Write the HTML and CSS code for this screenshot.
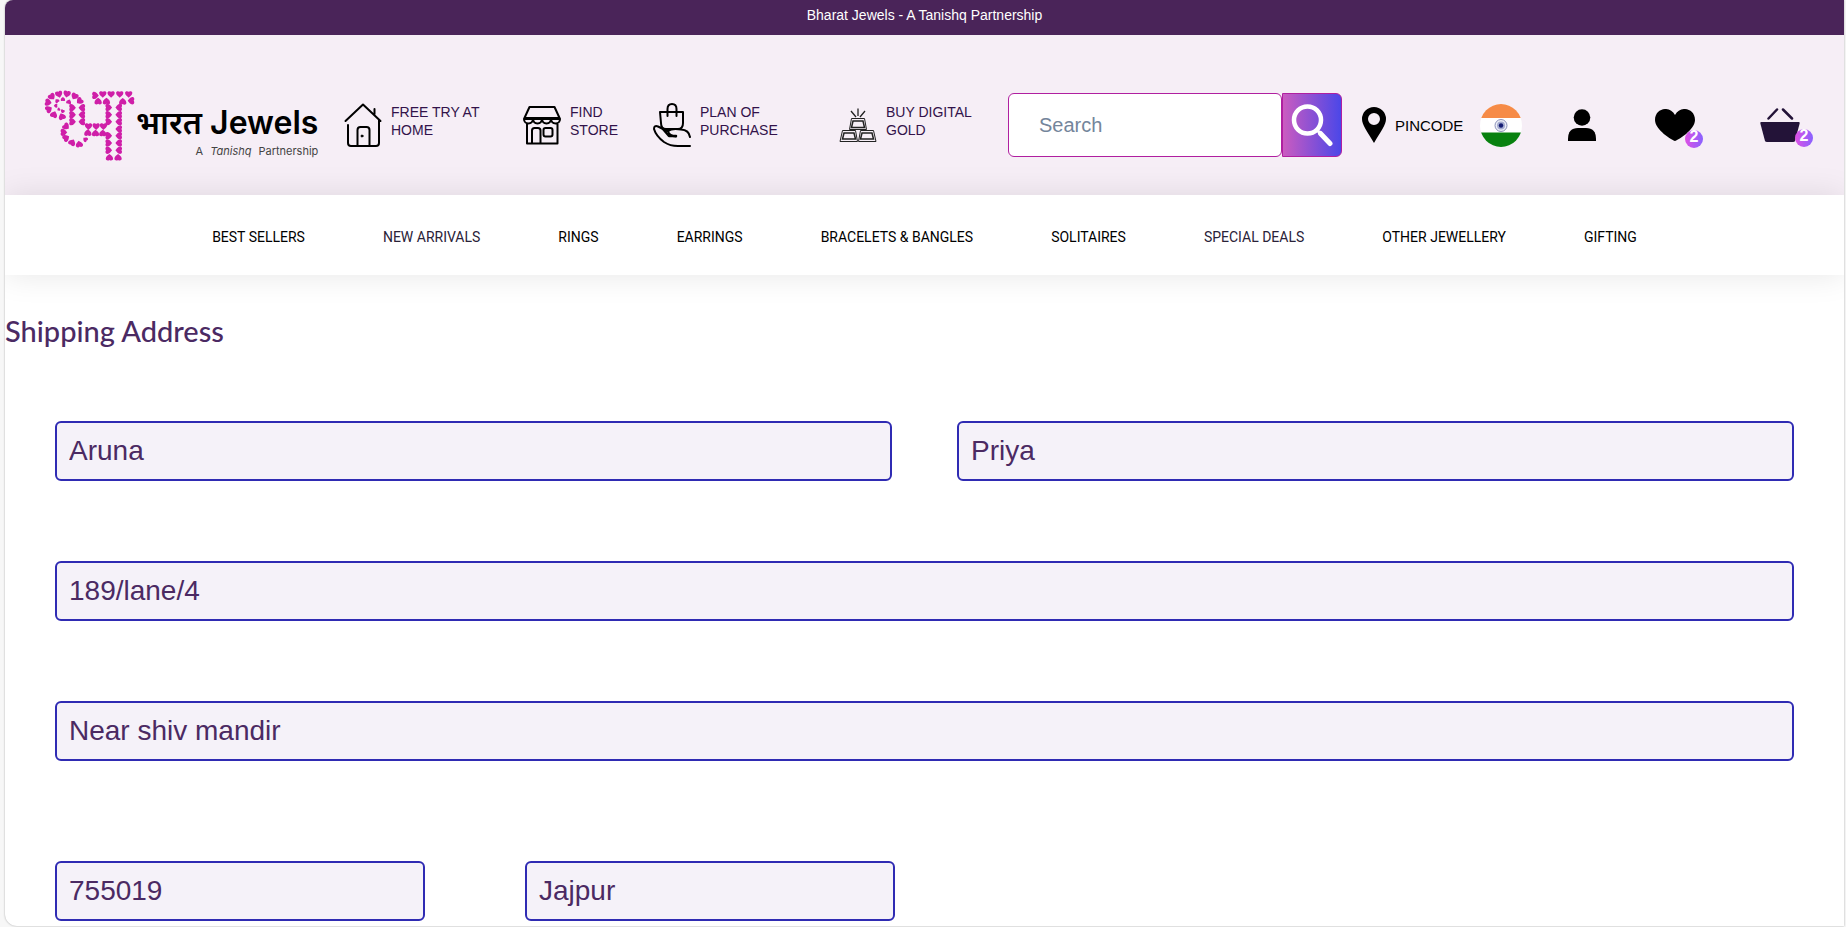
FILE: index.html
```html
<!DOCTYPE html>
<html lang="en">
<head>
<meta charset="utf-8">
<title>Bharat Jewels</title>
<link rel="stylesheet" href="styles.css">
</head>
<body>
<div class="frame">
  <div class="topbar">Bharat Jewels - A Tanishq Partnership</div>
  <header class="header">
    <a class="logo" href="#">
      <svg class="logo-mark" viewBox="130 260 280 216" aria-hidden="true">
        <defs><path id="h" d="M0 10C-3 7-11 3-11-4C-11-11-3-11 0-8C3-11 11-11 11-4C11 3 3 7 0 10Z"/></defs>
        <g fill="#cf1fa8">
          <use href="#h" transform="translate(146 300) rotate(-80)"/>
          <use href="#h" transform="translate(148 320) rotate(-120)"/>
          <use href="#h" transform="translate(163 336) rotate(-160)"/>
          <use href="#h" transform="translate(187 342) rotate(-200)"/>
          <use href="#h" transform="translate(157 283) rotate(-40)"/>
          <use href="#h" transform="translate(178 276) rotate(-15)"/>
          <use href="#h" transform="translate(202 275) rotate(10)"/>
          <use href="#h" transform="translate(225 282) rotate(30)"/>
          <use href="#h" transform="translate(240 296) rotate(50)"/>
          <use href="#h" transform="translate(247 316) rotate(90)"/>
          <use href="#h" transform="translate(247 337) rotate(90)"/>
          <use href="#h" transform="translate(247 358) rotate(90)"/>
          <use href="#h" transform="translate(208 298) rotate(200) scale(.7)"/>
          <use href="#h" transform="translate(190 290) rotate(180) scale(.6)"/>
          <use href="#h" transform="translate(172 295) rotate(140) scale(.6)"/>
          <use href="#h" transform="translate(168 310) rotate(90) scale(.55)"/>
          <use href="#h" transform="translate(177 321) rotate(60) scale(.45)"/>
          <use href="#h" transform="translate(189 327) rotate(20) scale(.55)"/>
          <use href="#h" transform="translate(219 316) rotate(-90)"/>
          <use href="#h" transform="translate(219 337) rotate(-90)"/>
          <use href="#h" transform="translate(219 358) rotate(-90)"/>
          <use href="#h" transform="translate(200 373) rotate(-50)"/>
          <use href="#h" transform="translate(193 390) rotate(-90)"/>
          <use href="#h" transform="translate(200 407) rotate(-120)"/>
          <use href="#h" transform="translate(218 420) rotate(-150)"/>
          <use href="#h" transform="translate(239 425) rotate(170)"/>
          <use href="#h" transform="translate(257 411) rotate(130) scale(.7)"/>
          <use href="#h" transform="translate(267 373)"/>
          <use href="#h" transform="translate(290 373)"/>
          <use href="#h" transform="translate(312 373)"/>
          <use href="#h" transform="translate(265 391) rotate(180)"/>
          <use href="#h" transform="translate(288 392) rotate(180)"/>
          <use href="#h" transform="translate(310 392) rotate(180)"/>
          <use href="#h" transform="translate(288 279) rotate(-90)"/>
          <use href="#h" transform="translate(310 276)"/>
          <use href="#h" transform="translate(335 276)"/>
          <use href="#h" transform="translate(361 276)"/>
          <use href="#h" transform="translate(388 276)"/>
          <use href="#h" transform="translate(296 296) rotate(180)"/>
          <use href="#h" transform="translate(321 296) rotate(180)"/>
          <use href="#h" transform="translate(370 297) rotate(180)"/>
          <use href="#h" transform="translate(395 295) rotate(90)"/>
          <use href="#h" transform="translate(328 315) rotate(-90)"/>
          <use href="#h" transform="translate(328 337) rotate(-90)"/>
          <use href="#h" transform="translate(328 358) rotate(-90)"/>
          <use href="#h" transform="translate(328 400) rotate(-90)"/>
          <use href="#h" transform="translate(328 422) rotate(-90)"/>
          <use href="#h" transform="translate(328 444) rotate(-90)"/>
          <use href="#h" transform="translate(330 465) rotate(180)"/>
          <use href="#h" transform="translate(358 315) rotate(90)"/>
          <use href="#h" transform="translate(358 337) rotate(90)"/>
          <use href="#h" transform="translate(358 358) rotate(90)"/>
          <use href="#h" transform="translate(358 380) rotate(90)"/>
          <use href="#h" transform="translate(358 400) rotate(90)"/>
          <use href="#h" transform="translate(358 422) rotate(90)"/>
          <use href="#h" transform="translate(358 444) rotate(90)"/>
          <use href="#h" transform="translate(356 465) rotate(180)"/>
        </g>
      </svg>
      <span class="logo-words">
        <span class="logo-name"><span lang="hi">भारत</span> Jewels</span>
        <span class="logo-sub"><span>A</span> <span class="logo-brand">Tanishq</span> <span>Partnership</span></span>
      </span>
    </a>
    <nav class="features" aria-label="Services">
      <a class="feature" href="#">
        <svg class="feature-icon" viewBox="0 0 38 44" aria-hidden="true" fill="none" stroke="#000" stroke-width="2" stroke-linecap="round" stroke-linejoin="round"><path d="M1.500 18L19 1.500L36.500 18M4 22V40Q4 43 7 43H32Q35 43 35 40V17M30.500 11V6M13.500 42V27Q13.500 24 16.500 24H22.500Q25.500 24 25.500 27V42"/><circle cx="18" cy="33" r="1" fill="#000" stroke-width="1"/></svg>
        <span>FREE TRY AT<br>HOME</span>
      </a>
      <a class="feature" href="#">
        <svg class="feature-icon" viewBox="0 0 38 44" aria-hidden="true" fill="none" stroke="#000" stroke-width="2" stroke-linejoin="round"><path d="M6.500 4H31.500L37 16H1ZM1 16C1 22 9.500 22 10 16C10.500 22 18.500 22 19 16C19.500 22 27.500 22 28 16C28.500 22 37 22 37 16M4 21V40.500H34.500V21M9 40V27.500Q9 25 11.500 25H15Q17.500 25 17.500 27.500V40"/><path d="M1 15.500H37" stroke-width="3"/><rect x="20.500" y="25" width="9" height="8.500" rx="2"/></svg>
        <span>FIND<br>STORE</span>
      </a>
      <a class="feature" href="#">
        <svg class="feature-icon" viewBox="0 0 38 44" aria-hidden="true" fill="none" stroke="#000" stroke-width="2" stroke-linecap="round" stroke-linejoin="round"><path d="M7 9H30V20Q30 26 25 26H13Q8 26 8 20ZM14.500 13V6Q14.500 1 19 1Q23.500 1 23.500 6V13M37 34Q36 27 28 26.500Q19 25 15 28Q16 33 23 33.500M14 28L5 23.500Q1 22 1 26Q3 33 11 39Q17 43 25 43H37"/><path d="M10 26L16 33H23" stroke-width="2.500"/></svg>
        <span>PLAN OF<br>PURCHASE</span>
      </a>
      <a class="feature" href="#">
        <svg class="feature-icon" viewBox="0 0 38 44" aria-hidden="true" fill="none" stroke="#222" stroke-width="1"><path d="M12.500 15.500H25.500L27.500 26.500H10.500ZM3.500 27.500H16.500L18.500 38.500H1ZM21.500 27.500H34.500L37 38.500H19.500Z"/><path d="M14 18H24L25.500 24.500H12.500ZM5 30H15L16.500 36H3.500ZM23 30H33L34.500 36H21.500Z" stroke-width="1.500"/><path d="M19 5.500V13M12 8L17 14M26 8L21 14" stroke-width="1.300"/></svg>
        <span>BUY DIGITAL<br>GOLD</span>
      </a>
    </nav>
    <form class="search" role="search">
      <input class="search-input" type="search" placeholder="Search" aria-label="Search">
      <button class="search-button" type="button" aria-label="Search">
        <svg class="search-icon" viewBox="0 0 42 44" aria-hidden="true" fill="none" stroke="#fff" stroke-linecap="round"><circle cx="16.500" cy="17" r="13.500" stroke-width="4.500"/><path d="M26.500 27.500L29 30" stroke-width="3"/><path d="M29.500 30.500L39 40.500" stroke-width="5"/></svg>
      </button>
    </form>
    <div class="actions">
      <a class="pincode" href="#">
        <svg class="pin-icon" viewBox="0 0 24 36" aria-hidden="true"><path fill-rule="evenodd" d="M12 0A12 12 0 0 0 0 12C0 18 5 24 12 36C19 24 24 18 24 12A12 12 0 0 0 12 0ZM12 6A6 6 0 1 1 12 18A6 6 0 0 1 12 6Z"/></svg>
        <span>PINCODE</span>
      </a>
      <a href="#" aria-label="Country: India">
        <svg class="flag-icon" viewBox="0 0 42 43" aria-hidden="true"><clipPath id="c"><ellipse cx="21" cy="21.500" rx="21" ry="21.500"/></clipPath><g clip-path="url(#c)"><path fill="#fff" d="M0 0H42V43H0Z"/><path fill="#f68b47" d="M0 0H42V14H0Z"/><path fill="#08810f" d="M0 28.500H42V43H0Z"/></g><circle cx="21" cy="21.500" r="6" fill="#eceef5" stroke="#8d93bb"/><circle cx="21" cy="21.500" r="4" fill="#a4abd0"/><circle cx="21" cy="21.500" r="2.200" fill="#151c73"/></svg>
      </a>
      <a href="#" aria-label="Account">
        <svg class="person-icon" viewBox="0 0 28 32" aria-hidden="true"><circle cx="14" cy="8.500" r="8.300"/><path d="M0 32V30Q0 19 10 19H18Q28 19 28 30V32Z"/></svg>
      </a>
      <a href="#" class="counted" aria-label="Wishlist, 2 items">
        <svg class="heart-icon" viewBox="0 0 40 32" aria-hidden="true"><path d="M20 32C17 31 0 21 0 11C0-1 15-4 20 6C25-4 40-1 40 11C40 21 23 31 20 32Z"/></svg>
        <span class="badge">2</span>
      </a>
      <a href="#" class="counted" aria-label="Basket, 2 items">
        <svg class="basket-icon" viewBox="0 0 40 34" aria-hidden="true" fill="#231338"><path d="M1 14H39Q40 14 39.500 16L35 33Q34.700 34 33 34H7Q5.500 34 5 33L.500 16Q0 14 1 14Z"/><path d="M8.500 10.500L17 1.500M23 1.500L32 10.500" stroke="#231338" stroke-width="2.500" stroke-linecap="round"/></svg>
        <span class="badge badge-basket">2</span>
      </a>
    </div>
  </header>
  <nav class="menu" aria-label="Categories">
    <a href="#">BEST SELLERS</a>
    <a class="soft" href="#">NEW ARRIVALS</a>
    <a href="#">RINGS</a>
    <a href="#">EARRINGS</a>
    <a href="#">BRACELETS &amp; BANGLES</a>
    <a href="#">SOLITAIRES</a>
    <a class="soft" href="#">SPECIAL DEALS</a>
    <a href="#">OTHER JEWELLERY</a>
    <a href="#">GIFTING</a>
  </nav>
  <main>
    <h1 class="title">Shipping Address</h1>
    <form class="address">
      <div class="row row-names">
        <input class="field" type="text" value="Aruna" aria-label="First name">
        <input class="field" type="text" value="Priya" aria-label="Last name">
      </div>
      <div class="row"><input class="field" type="text" value="189/lane/4" aria-label="Address"></div>
      <div class="row"><input class="field" type="text" value="Near shiv mandir" aria-label="Landmark"></div>
      <div class="row row-city">
        <input class="field" type="text" value="755019" aria-label="Postal code">
        <input class="field" type="text" value="Jajpur" aria-label="City">
      </div>
    </form>
  </main>
</div>
</body>
</html>
```
FILE: styles.css
```css
* { box-sizing: border-box; }
body {
  margin: 0;
  background: #f7f7f7;
  font-family: "Liberation Sans", Arial, sans-serif;
  color: #000;
}
a { color: inherit; text-decoration: none; }
svg { display: block; flex: none; }
input, button { font-family: inherit; margin: 0; }
.frame {
  margin: 0 2px 1px 5px;
  background: #fff;
  border-radius: 8px 0 0 12px;
  overflow: hidden;
  box-shadow: 0 0 2px rgba(0, 0, 0, .35);
}
.topbar {
  height: 35px;
  line-height: 30px;
  background: #4a2459;
  color: #fff;
  font-size: 14px;
  text-align: center;
}
.header {
  height: 160px;
  padding: 20px 0 0 40px;
  background: #f6eef6;
  display: grid;
  grid-template-columns: 299px minmax(0, 664fr) minmax(0, 354fr) minmax(0, 482fr);
  align-items: center;
}
.logo { display: flex; align-items: flex-start; }
.logo-mark { width: 93px; height: 72px; margin-left: -2px; }
.logo-words { display: flex; flex-direction: column; padding-top: 14px; }
.logo-name {
  font: 600 32px/40px Inter, "Noto Sans", "Noto Sans Devanagari", sans-serif;
  white-space: nowrap;
}
.logo-sub {
  display: flex;
  justify-content: flex-end;
  gap: 7px;
  font: 11px/16px Inter, sans-serif;
  color: #444;
}
.logo-brand { font-style: italic; }
.features {
  display: grid;
  grid-template-columns: 179fr 130fr 186fr 169fr;
}
.feature {
  display: flex;
  gap: 9px;
  font-size: 14px;
  line-height: 18px;
  color: #32124a;
  white-space: nowrap;
}
.feature-icon { width: 38px; height: 44px; }
.search { display: flex; height: 64px; margin-right: 20px; }
.search-input {
  flex: 1;
  min-width: 0;
  padding: 0 30px;
  border: 1px solid #b01fa0;
  border-radius: 6px;
  background: #fff;
  font-size: 20px;
  appearance: none;
}
.search-input::placeholder { color: #74859b; opacity: 1; }
.search-button {
  width: 60px;
  padding: 0 0 0 8px;
  border: 1px solid #b01fa0;
  border-radius: 0 6px 6px 0;
  background: linear-gradient(90deg, #cb5bc0, #4b47e8);
}
.search-icon { width: 42px; height: 44px; }
.actions {
  display: grid;
  grid-template-columns: 118fr 88fr 87fr 105fr 84fr;
  align-items: center;
}
.pincode { display: flex; align-items: center; gap: 9px; font-size: 15px; }
.pin-icon { width: 24px; height: 36px; }
.flag-icon { width: 42px; height: 43px; }
.person-icon { width: 28px; height: 32px; }
.heart-icon { width: 40px; height: 32px; }
.basket-icon { width: 40px; height: 34px; }
.counted { position: relative; }
.badge {
  position: absolute;
  left: 30px;
  top: 21px;
  width: 18px;
  height: 18px;
  border-radius: 50%;
  background: linear-gradient(90deg, #df50e4, #8a62ff);
  color: #fff;
  font-size: 16px;
  font-weight: bold;
  line-height: 14px;
  text-align: center;
}
.badge-basket { left: 35px; }
.menu {
  position: relative;
  height: 80px;
  padding-top: 4px;
  background: #fff;
  display: flex;
  justify-content: center;
  align-items: center;
  gap: 78px;
  font: 14px/20px Roboto, "Liberation Sans", sans-serif;
  white-space: nowrap;
  box-shadow: 0 0 32px rgba(0, 0, 0, .1);
}
.soft { color: #2a2238; }
.title {
  margin: 36px 0 0;
  font: 500 29px/40px Lato, "Open Sans", sans-serif;
  color: #4b2a63;
}
.address {
  padding: 70px 50px 5px;
  display: flex;
  flex-direction: column;
  gap: 80px;
}
.row { display: grid; }
.row-names { grid-template-columns: 1fr 1fr; column-gap: 65px; }
.row-city {
  grid-template-columns: 370fr 370fr 799fr;
  column-gap: 100px;
  padding-top: 20px;
}
.field {
  width: 100%;
  min-width: 0;
  height: 60px;
  padding: 0 12px;
  border: 2px solid #2f2bb3;
  border-radius: 6px;
  background: #f5f2f9;
  color: #4b2a63;
  font-size: 28px;
}
```
